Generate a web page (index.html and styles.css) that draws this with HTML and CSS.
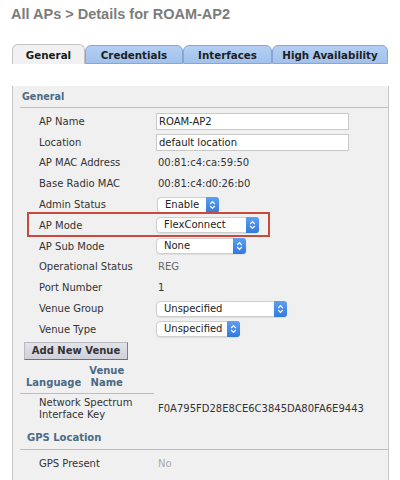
FILE: index.html
```html
<!DOCTYPE html>
<html>
<head>
<meta charset="utf-8">
<link rel="stylesheet" href="styles.css">
</head>
<body>
<div class="wrap">
  <div class="title">All APs &gt; Details for ROAM-AP2</div>
  <div class="tabs">
    <div class="tab active t1">General</div>
    <div class="tab t2">Credentials</div>
    <div class="tab t3">Interfaces</div>
    <div class="tab t4">High Availability</div>
  </div>
  <div class="panel">
    <div class="section">General</div>
    <div class="rows">
      <div class="row"><span class="label">AP Name</span><span class="input w193">ROAM-AP2</span></div>
      <div class="row"><span class="label">Location</span><span class="input w193">default location</span></div>
      <div class="row"><span class="label">AP MAC Address</span><span class="value">00:81:c4:ca:59:50</span></div>
      <div class="row"><span class="label">Base Radio MAC</span><span class="value">00:81:c4:d0:26:b0</span></div>
      <div class="row"><span class="label">Admin Status</span><span class="select s-enable"><span class="sel-text">Enable</span><span class="step"><svg width="7" height="10" viewBox="0 0 7 10"><path d="M1.2 4 L3.5 1.7 L5.8 4 M1.2 6 L3.5 8.3 L5.8 6" fill="none" stroke="#fff" stroke-width="1.2"/></svg></span></span></div>
      <div class="row highlight"><span class="label">AP Mode</span><span class="select s-mode"><span class="sel-text">FlexConnect</span><span class="step"><svg width="7" height="10" viewBox="0 0 7 10"><path d="M1.2 4 L3.5 1.7 L5.8 4 M1.2 6 L3.5 8.3 L5.8 6" fill="none" stroke="#fff" stroke-width="1.2"/></svg></span></span></div>
      <div class="row"><span class="label">AP Sub Mode</span><span class="select s-sub"><span class="sel-text">None</span><span class="step"><svg width="7" height="10" viewBox="0 0 7 10"><path d="M1.2 4 L3.5 1.7 L5.8 4 M1.2 6 L3.5 8.3 L5.8 6" fill="none" stroke="#fff" stroke-width="1.2"/></svg></span></span></div>
      <div class="row"><span class="label">Operational Status</span><span class="value muted">REG</span></div>
      <div class="row"><span class="label">Port Number</span><span class="value">1</span></div>
      <div class="row"><span class="label">Venue Group</span><span class="select s-group"><span class="sel-text">Unspecified</span><span class="step"><svg width="7" height="10" viewBox="0 0 7 10"><path d="M1.2 4 L3.5 1.7 L5.8 4 M1.2 6 L3.5 8.3 L5.8 6" fill="none" stroke="#fff" stroke-width="1.2"/></svg></span></span></div>
      <div class="row"><span class="label">Venue Type</span><span class="select s-type"><span class="sel-text">Unspecified</span><span class="step"><svg width="7" height="10" viewBox="0 0 7 10"><path d="M1.2 4 L3.5 1.7 L5.8 4 M1.2 6 L3.5 8.3 L5.8 6" fill="none" stroke="#fff" stroke-width="1.2"/></svg></span></span></div>
    </div>
    <div class="btn">Add New Venue</div>
    <div class="thead">
      <span class="th lang">Language</span>
      <span class="th vname">Venue<br>Name</span>
    </div>
    <div class="row2">
      <span class="label">Network Spectrum<br>Interface Key</span>
      <span class="value">F0A795FD28E8CE6C3845DA80FA6E9443</span>
    </div>
    <div class="section gps">GPS Location</div>
    <div class="rows">
      <div class="row"><span class="label">GPS Present</span><span class="value light">No</span></div>
    </div>
  </div>
</div>
</body>
</html>
```

FILE: styles.css
```css
html, body {
  margin: 0;
  padding: 0;
  background: #ffffff;
  height: 480px;
  overflow: hidden;
}
body {
  font-family: "DejaVu Sans", Verdana, sans-serif;
  font-size: 10px;
  color: #333;
}
.wrap {
  margin-left: 12px;
  width: 377px;
}
.title {
  font-family: "Liberation Sans", Arial, sans-serif;
  font-weight: bold;
  font-size: 14.5px;
  line-height: 18px;
  color: #7c7c7c;
  padding-top: 5px;
  margin-left: -1px;
}
.tabs {
  display: flex;
  margin-top: 21px;
  height: 20px;
  align-items: flex-end;
}
.tab {
  box-sizing: border-box;
  height: 19px;
  line-height: 18px;
  text-align: center;
  font-weight: bold;
  font-size: 10.3px;
  color: #1e1e1e;
  background: linear-gradient(#b3cff2, #a2c1ec);
  border: 1px solid #86a6d3;
  border-radius: 6px 6px 0 0;
}
.tab.active {
  height: 20px;
  line-height: 20px;
  background: #f1f1f1;
  border-color: #c4c4c4;
  border-bottom: none;
  color: #1a1a1a;
}
.t1 { width: 73px; }
.t2 { width: 98px; }
.t3 { width: 89px; }
.t4 { width: 116px; }
.panel {
  background: #f0f0f0;
  border-left: 1px solid #c6c6c6;
  border-right: 1px solid #c6c6c6;
  padding-left: 7px;
  height: 416px;
}
.section {
  margin-top: 22px;
  height: 21px;
  line-height: 22px;
  padding-left: 2px;
  font-weight: bold;
  font-size: 9.6px;
  color: #4b6a85;
  border-bottom: 1px solid #b9bfca;
}
.section.gps {
  margin-top: 6px;
  padding-left: 7px;
  height: 22px;
  line-height: 22px;
  font-size: 10px;
}
.rows {
  padding-top: 3px;
}
.row {
  position: relative;
  display: flex;
  align-items: center;
  height: 20.8px;
}
.label {
  box-sizing: border-box;
  width: 136px;
  padding-left: 19px;
  flex: none;
}
.value {
  margin-left: 2px;
}
.muted { color: #666; }
.light { color: #aaa; }
.input {
  box-sizing: border-box;
  height: 17px;
  line-height: 15px;
  background: #fff;
  border: 1px solid #c9c9c9;
  padding-left: 2px;
  color: #222;
}
.w193 { width: 193px; }
.select {
  box-sizing: border-box;
  display: flex;
  align-items: stretch;
  height: 16px;
  background: #fff;
  border: 1px solid #cfcfcf;
  border-radius: 4px;
  box-shadow: 0 1px 1px rgba(0,0,0,0.08);
  color: #222;
}
.sel-text {
  flex: 1;
  line-height: 14px;
  padding-left: 7px;
}
.step {
  width: 13px;
  display: flex;
  align-items: center;
  justify-content: center;
  background: linear-gradient(#5d9ff0, #3379de);
  border-radius: 0 3px 3px 0;
  margin: -1px -1px -1px 0;
}
.s-enable { width: 62px; margin-left: 1px; }
.s-mode { width: 103px; }
.s-sub { width: 90px; }
.s-group { width: 131px; }
.s-type { width: 84px; }
.highlight::after {
  content: "";
  position: absolute;
  left: 7px;
  top: -2.5px;
  width: 243px;
  height: 25px;
  box-sizing: border-box;
  border: 2px solid #c84a3d;
}
.btn {
  box-sizing: border-box;
  margin-top: 2px;
  margin-left: 4px;
  width: 104px;
  height: 18px;
  line-height: 16px;
  text-align: center;
  font-weight: bold;
  color: #333;
  background: linear-gradient(#e2e2ea, #d0d0da);
  border: 1px solid #b9b9c2;
  border-right-color: #7d7d86;
  border-bottom-color: #6f6f78;
}
.thead {
  margin-top: 5px;
  width: 134px;
  display: flex;
  align-items: flex-end;
  padding-bottom: 4px;
  border-bottom: 1px solid #b9bfca;
  line-height: 12px;
}
.th {
  font-weight: bold;
  color: #4b6a85;
}
.lang { margin-left: 6px; }
.vname {
  margin-left: 7px;
  width: 37px;
  text-align: center;
}
.row2 {
  margin-top: 3px;
  display: flex;
  align-items: center;
  line-height: 12px;
}
```
